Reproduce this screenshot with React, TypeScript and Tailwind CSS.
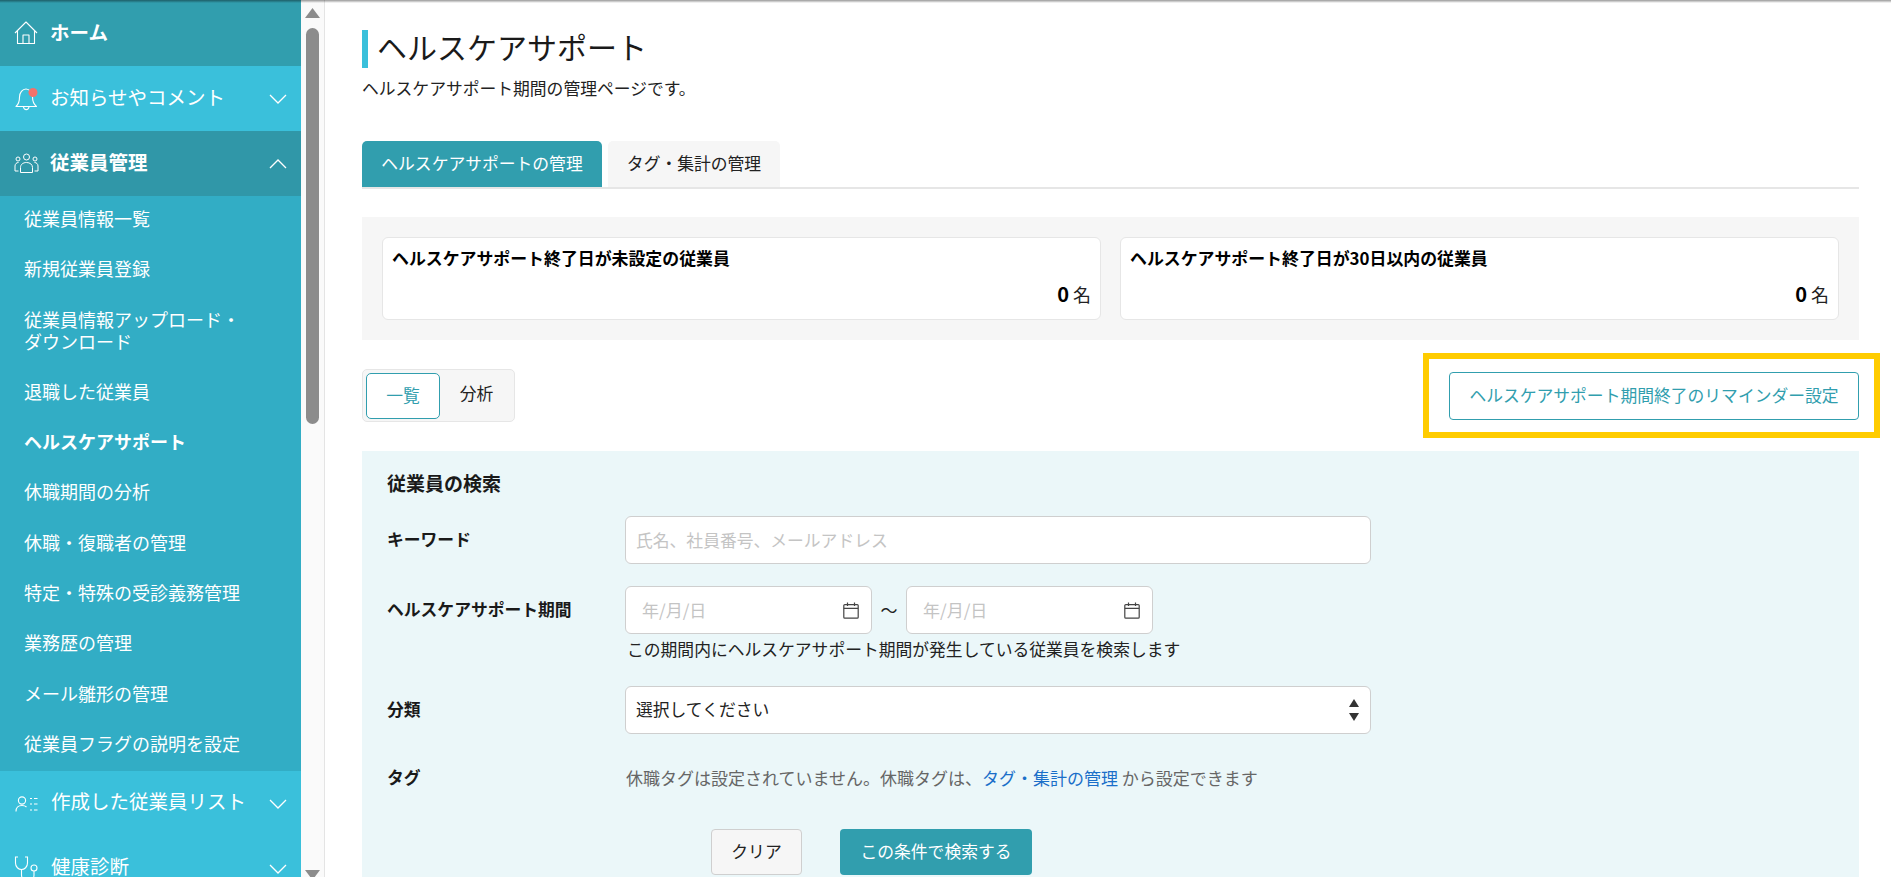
import { useState } from 'react';

function Chevron({ up }: { up?: boolean }) {
  return (
    <svg width="18" height="10" viewBox="0 0 18 10" fill="none" stroke="white" strokeWidth="1.3" className="absolute left-[269px] top-1/2 -translate-y-1/2">
      <polyline points={up ? '1,9 9,1 17,9' : '1,1 9,9 17,1'} />
    </svg>
  );
}

function HomeIcon() {
  return (
    <svg width="24" height="24" viewBox="0 0 24 24" fill="none" stroke="white" strokeWidth="1.1">
      <path d="M1 12 L12 1 L23 12 M3.5 10 V22.5 H20.5 V10 M9 22.5 V14 H15 V22.5" strokeLinejoin="round" />
    </svg>
  );
}

function BellIcon() {
  return (
    <svg width="26" height="26" viewBox="0 0 26 26" fill="none" stroke="white" strokeWidth="1.1">
      <path d="M2 20.5 C5 18 5.5 15 5.5 11 C5.5 6.5 8.5 3 12 3 C15.5 3 18.5 6.5 18.5 11 C18.5 15 19.5 18 22.5 20.5 Z" strokeLinejoin="round" />
      <path d="M9.5 21 C10 24.5 14.5 24.5 15 21" />
      <circle cx="19" cy="6.5" r="4.5" fill="#f2716b" stroke="none" />
    </svg>
  );
}

function UsersIcon() {
  return (
    <svg width="25" height="21" viewBox="0 0 25 21" fill="none" stroke="white" strokeWidth="1">
      <circle cx="12.5" cy="4" r="3" />
      <circle cx="4" cy="6" r="2" />
      <circle cx="21" cy="6" r="2" />
      <path d="M6.5 19.5 V14.5 C6.5 11.5 9 9.5 12.5 9.5 C16 9.5 18.5 11.5 18.5 14.5 V19.5 Z" />
      <path d="M4.5 18 H1 V13 C1 11 2.5 9.5 4.5 9.5 M20.5 18 H24 V13 C24 11 22.5 9.5 20.5 9.5" />
    </svg>
  );
}

function ListUserIcon() {
  return (
    <svg width="23" height="16" viewBox="0 0 23 16" fill="none" stroke="white" strokeWidth="1.1">
      <circle cx="7" cy="4.5" r="3.6" />
      <path d="M1 15.5 C1 11.5 3.5 9.5 7 9.5 C9 9.5 10.5 10 11.5 11" />
      <path d="M15 2.5 H17 M19 2.5 H22.5 M15 8 H17 M19 8 H22.5 M15 14 H17 M19 14 H22.5" />
    </svg>
  );
}

function StethoscopeIcon() {
  return (
    <svg width="25" height="26" viewBox="0 0 25 26" fill="none" stroke="white" strokeWidth="1.1">
      <path d="M4 1 H1.5 V7 C1.5 11 4.5 13.5 7.5 13.5 C10.5 13.5 13.5 11 13.5 7 V1 H11" />
      <path d="M7.5 13.5 V19 C7.5 23 11 25 14 25 C17.5 25 20 22.5 20 19 V15" />
      <circle cx="20" cy="12" r="3" />
    </svg>
  );
}

function CalendarIcon() {
  return (
    <svg width="16" height="17" viewBox="0 0 16 17" fill="none" stroke="#444" strokeWidth="1.2" className="shrink-0">
      <rect x="0.8" y="2.6" width="14.4" height="13.6" rx="1" />
      <path d="M0.8 6.4 H15.2 M4.5 0.5 V4 M11.5 0.5 V4" />
    </svg>
  );
}

const subItems = [
  '従業員情報一覧',
  '新規従業員登録',
  '従業員情報アップロード・\nダウンロード',
  '退職した従業員',
  'ヘルスケアサポート',
  '休職期間の分析',
  '休職・復職者の管理',
  '特定・特殊の受診義務管理',
  '業務歴の管理',
  'メール雛形の管理',
  '従業員フラグの説明を設定',
];

function Sidebar() {
  return (
    <aside className="w-[301px] shrink-0 bg-[#3ac0db] text-white overflow-hidden">
      <div className="relative h-[66px] bg-[#319eae] flex items-center pl-[14px] gap-[12px]">
        <HomeIcon />
        <span className="text-[19.5px] font-bold -mt-[3px]">ホーム</span>
      </div>
      <div className="relative h-[65px] flex items-center pl-[14px] gap-[10px]">
        <BellIcon />
        <span className="text-[19.5px] -mt-[4px]">お知らせやコメント</span>
        <Chevron />
      </div>
      <div className="relative h-[65px] bg-[#3097a8] flex items-center pl-[14px] gap-[11px]">
        <UsersIcon />
        <span className="text-[19.5px] font-bold -mt-[4px]">従業員管理</span>
        <Chevron up />
      </div>
      <ul className="bg-[#32adc5] pl-[24px]">
        {subItems.map((item) => (
          <li
            key={item}
            className={`pt-[11px] pb-[17.3px] text-[18px] leading-[22px] whitespace-pre-line ${
              item === 'ヘルスケアサポート' ? 'font-bold' : ''
            }`}
          >
            {item}
          </li>
        ))}
      </ul>
      <div className="relative h-[65px] flex items-center pl-[15px] gap-[13px]">
        <ListUserIcon />
        <span className="text-[19.5px] -mt-[6px]">作成した従業員リスト</span>
        <Chevron />
      </div>
      <div className="relative h-[65px] flex items-center pl-[14px] gap-[12px]">
        <StethoscopeIcon />
        <span className="text-[19.5px] -mt-[6px]">健康診断</span>
        <Chevron />
      </div>
    </aside>
  );
}

function Scrollbar() {
  return (
    <div className="w-[24px] shrink-0 bg-[#fafafa] border-r border-[#e4e4e4] flex flex-col items-center pr-[1px] h-full">
      <svg width="15" height="10" viewBox="0 0 15 10" className="mt-[8px]">
        <path d="M7.5 0 L15 10 H0 Z" fill="#8c8c8c" />
      </svg>
      <div className="w-[13px] h-[396px] mt-[10px] rounded-full bg-[#8c8c8c]" />
      <svg width="15" height="10" viewBox="0 0 15 10" className="mt-auto mb-[-3px]">
        <path d="M7.5 10 L15 0 H0 Z" fill="#8c8c8c" />
      </svg>
    </div>
  );
}

function SummaryCard({ title }: { title: string }) {
  return (
    <div className="flex-1 h-[83px] bg-white border border-[#e6e6e6] rounded-[6px] px-[9px] pt-[9px]">
      <p className="text-[16.9px] leading-[22px] font-bold text-black">{title}</p>
      <p className="text-right text-[18px] leading-[24px] mt-[13px] text-[#222]">
        <span className="font-bold text-[20px] text-black">0</span> 名
      </p>
    </div>
  );
}

function DateField() {
  return (
    <div className="w-[247px] h-[48px] bg-white border border-[#cfcfcf] rounded-[6px] flex items-center justify-between pl-[16px] pr-[12px]">
      <span className="text-[#c4c4c4] text-[17px]">年/月/日</span>
      <CalendarIcon />
    </div>
  );
}

function Row({ label, className, children }: { label: string; className?: string; children: React.ReactNode }) {
  return (
    <div className={`flex ${className ?? ''}`}>
      <div className="w-[238px] shrink-0 text-[16.8px] font-bold text-[#1a1a1a] leading-[46px]">{label}</div>
      <div>{children}</div>
    </div>
  );
}

export default function App() {
  const [keyword, setKeyword] = useState('');

  return (
    <div className="relative h-screen w-full flex overflow-hidden bg-white font-['Noto_Sans_CJK_JP','Liberation_Sans',sans-serif]">
      <Sidebar />
      <Scrollbar />

      <main className="flex-1 min-w-0 pl-[37px] pr-[32px] pt-[30px] text-[#222]">
        <h1 className="border-l-[6px] border-[#3ac0db] pl-[9px] h-[38px] flex items-center text-[30px] leading-[34px] pb-[7px] font-normal text-[#1a1a1a]">
          ヘルスケアサポート
        </h1>
        <p className="text-[16.8px] leading-[24px] mt-[8px]">ヘルスケアサポート期間の管理ページです。</p>

        {/* Tabs */}
        <div className="flex gap-[6px] mt-[41px] border-b-2 border-[#e6e6e6] h-[48px]">
          <div className="w-[240px] h-[46px] bg-[#319eae] text-white rounded-t-[5px] flex items-center justify-center text-[16.8px]">
            ヘルスケアサポートの管理
          </div>
          <div className="w-[172px] h-[46px] bg-[#f6f6f6] rounded-t-[5px] flex items-center justify-center text-[16.8px]">
            タグ・集計の管理
          </div>
        </div>

        {/* Summary */}
        <section className="mt-[28px] h-[123px] bg-[#f6f6f6] px-[20px] py-[20px] flex gap-[19px]">
          <SummaryCard title="ヘルスケアサポート終了日が未設定の従業員" />
          <SummaryCard title="ヘルスケアサポート終了日が30日以内の従業員" />
        </section>

        {/* View switch + reminder */}
        <div className="flex justify-between mt-[29px] h-[53px]">
          <div className="w-[153px] h-[53px] bg-[#f6f6f6] border border-[#e6e6e6] rounded-[5px] flex items-center pl-[3px]">
            <div className="w-[74px] h-[46px] bg-white border border-[#319eae] rounded-[5px] text-[#319eae] text-[16.8px] flex items-center justify-center">
              一覧
            </div>
            <div className="w-[73px] text-center text-[16.8px] -mt-[3px]">分析</div>
          </div>
          <button className="w-[410px] h-[48px] mt-[3px] bg-white border border-[#319eae] rounded-[4px] text-[#319eae] text-[16.8px]">
            ヘルスケアサポート期間終了のリマインダー設定
          </button>
        </div>

        {/* Search */}
        <section className="mt-[29px] bg-[#ebf7f9] pl-[25px] pt-[20px] pb-[40px]">
          <h2 className="text-[19px] leading-[24px] font-bold text-[#1a1a1a]">従業員の検索</h2>
          <Row label="キーワード" className="mt-[21px]">
            <input
              value={keyword}
              onChange={(e) => setKeyword(e.target.value)}
              placeholder="氏名、社員番号、メールアドレス"
              className="w-[746px] h-[48px] bg-white border border-[#cfcfcf] rounded-[6px] px-[10px] text-[16.8px] placeholder:text-[#c4c4c4] outline-none"
            />
          </Row>
          <Row label="ヘルスケアサポート期間" className="mt-[22px]">
            <div className="flex items-center">
              <DateField />
              <span className="w-[34px] text-center text-[17px]">〜</span>
              <DateField />
            </div>
            <p className="text-[16.8px] leading-[24px] mt-[3px] pl-[2px] whitespace-nowrap">この期間内にヘルスケアサポート期間が発生している従業員を検索します</p>
          </Row>
          <Row label="分類" className="mt-[25px]">
            <div className="w-[746px] h-[48px] bg-white border border-[#cfcfcf] rounded-[6px] flex items-center justify-between pl-[10px] pr-[11px] text-[16.8px]">
              選択してください
              <svg width="10" height="22" viewBox="0 0 10 22" fill="#333">
                <path d="M5 0 L10 8 H0 Z M5 22 L0 14 H10 Z" />
              </svg>
            </div>
          </Row>
          <Row label="タグ" className="mt-[20px]">
            <p className="text-[17px] leading-[48px] text-[#666] pl-[1px] whitespace-nowrap">
              休職タグは設定されていません。休職タグは、<span className="text-[#1a6fc9]">タグ・集計の管理</span> から設定できます
            </p>
          </Row>
          <div className="flex gap-[38px] mt-[27px] pl-[324px]">
            <button className="w-[91px] h-[46px] bg-[#f6f6f6] border border-[#cfcfcf] rounded-[4px] text-[16.8px]">クリア</button>
            <button className="w-[192px] h-[46px] bg-[#319eae] text-white rounded-[4px] text-[16.8px]">この条件で検索する</button>
          </div>
        </section>
      </main>

      {/* Highlight annotation over the reminder button */}
      <div className="absolute left-[1423px] top-[353px] w-[457px] h-[85px] border-[6px] border-[#ffcc00] pointer-events-none" />
      <div className="absolute inset-x-0 top-0 h-[3px] bg-gradient-to-b from-black/40 to-transparent pointer-events-none" />
    </div>
  );
}
